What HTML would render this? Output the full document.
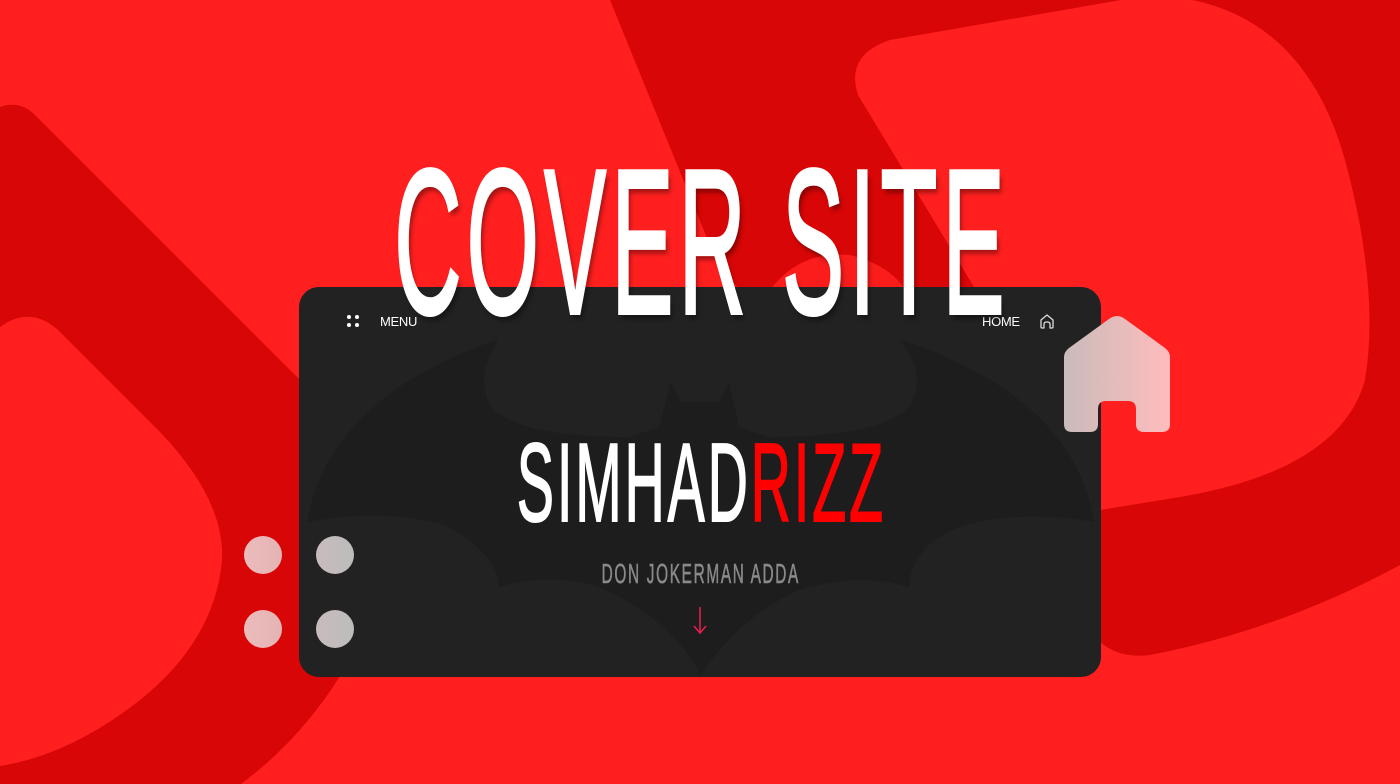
<!DOCTYPE html>
<html><head><meta charset="utf-8"><style>
*{margin:0;padding:0;box-sizing:border-box}
body{width:1400px;height:784px;overflow:hidden;position:relative;background:#ff1f1f;font-family:"Liberation Sans",sans-serif}
.abs{position:absolute}
.t{position:absolute;white-space:nowrap;transform-origin:center center;text-align:center}
</style></head><body>
<svg class="abs" style="left:0;top:0" width="1400" height="784" viewBox="0 0 1400 784">
  <path d="M610 0 L1400 0 L1400 565 Q1280 630 1150 655 Q1110 660 1090 630 L720 270 Z" fill="#d80606"/>
  <path d="M890 40 L1150 -5 Q1300 0 1345 160 Q1380 290 1365 380 Q1340 470 1180 497 L1088 512 L1000 330 L858 95 Q845 55 890 40 Z" fill="#ff1f1f"/>
  <path d="M0 107 Q20 100 35 115 L320 400 L340 676 Q300 740 241 784 L0 784 Z" fill="#d80606"/>
  <path d="M0 327 Q30 305 58 330 L160 432 Q225 500 222 560 Q215 640 140 700 Q70 755 0 766 Z" fill="#ff1f1f"/>
  <path d="M770 290 Q800 250 850 255 Q890 265 905 290 Z" fill="#ff1f1f" opacity="0.9"/>
</svg>

<div class="abs" style="left:299px;top:287px;width:802px;height:390px;background:#222;border-radius:20px;overflow:hidden">
  <svg class="abs" style="left:0;top:0" width="802" height="390" viewBox="0 0 802 390">
    <path d="M200 52 Q30 110 8 235 Q90 220 150 240 Q200 270 200 300 Q250 285 300 300 Q370 330 402 388 Q440 330 500 303 Q560 285 610 300 Q612 260 660 240 Q720 222 795 235 Q775 110 600 52 Q630 90 610 120 Q580 150 470 150 L440 140 L430 95 L420 115 L382 115 L372 95 L360 140 L330 150 Q220 150 192 120 Q175 90 200 52 Z" fill="#1d1d1d"/>
  </svg>
  <div class="abs" style="left:48px;top:28px;width:4px;height:4px;border-radius:50%;background:#fff"></div>
  <div class="abs" style="left:56px;top:28px;width:4px;height:4px;border-radius:50%;background:#fff"></div>
  <div class="abs" style="left:48px;top:36px;width:4px;height:4px;border-radius:50%;background:#fff"></div>
  <div class="abs" style="left:56px;top:36px;width:4px;height:4px;border-radius:50%;background:#fff"></div>
  <div class="abs" style="left:81px;top:27px;color:#fff;font-size:13px;letter-spacing:-0.3px">MENU</div>
  <div class="abs" style="left:683px;top:27px;color:#fff;font-size:13px;letter-spacing:-0.3px">HOME</div>
  <svg class="abs" style="left:739px;top:25px" width="18" height="18" viewBox="0 0 18 18"><path d="M3 8 L9 3 L15 8 L15 15 Q15 16 14 16 L12 16 L12 12 Q12 10 9 10 Q6 10 6 12 L6 16 L4 16 Q3 16 3 15 Z" fill="none" stroke="#ddd" stroke-width="1.3" stroke-linejoin="round"/></svg>
  <div class="t" style="left:0;width:802px;top:272px;color:#8a8a8a;font-size:28px;line-height:30px;letter-spacing:3px;text-indent:3px;transform:scaleX(0.55);-webkit-text-stroke:0.6px #8a8a8a">DON JOKERMAN ADDA</div>
  <svg class="abs" style="left:393px;top:318px" width="16" height="30" viewBox="0 0 16 30"><path d="M8 2 L8 28 M2 21 L8 28 L14 21" fill="none" stroke="#e0204a" stroke-width="1.6"/></svg>
</div>

<div class="t" style="left:200px;width:1000px;top:428px;color:#fff;font-size:111px;line-height:111px;letter-spacing:6px;text-indent:6px;transform:scaleX(0.5);-webkit-text-stroke:2px #fff">SIMHAD<span style="color:#ff0000;-webkit-text-stroke:2px #ff0000">RIZZ</span></div>

<div class="t" style="left:100px;width:1200px;top:138px;color:#fff;font-size:206px;line-height:208px;letter-spacing:12px;text-indent:12px;transform:translateX(-41px) scaleX(0.45);-webkit-text-stroke:4px #fff;text-shadow:6px 6px 6px rgba(0,0,0,0.35)">COVER SITE</div>

<svg class="abs" style="left:1060px;top:312px" width="114" height="124" viewBox="0 0 114 124">
  <defs><linearGradient id="g" x1="0" x2="1" y1="0" y2="0"><stop offset="0" stop-color="#cabbbb"/><stop offset="1" stop-color="#ffbcbc"/></linearGradient></defs>
  <path d="M4 45 Q4 40 9 36 L49 7 Q57 1 65 7 L105 36 Q110 40 110 45 L110 112 Q110 120 102 120 L84 120 Q76 120 76 112 L76 97 Q76 89 68 89 L46 89 Q38 89 38 97 L38 112 Q38 120 30 120 L12 120 Q4 120 4 112 Z" fill="url(#g)"/>
</svg>

<div class="abs" style="left:244px;top:536px;width:38px;height:38px;border-radius:50%;background:linear-gradient(90deg,#ecbcbc,#e4b4b4)"></div>
<div class="abs" style="left:316px;top:536px;width:38px;height:38px;border-radius:50%;background:linear-gradient(90deg,#c8bcbc,#bcbcbc)"></div>
<div class="abs" style="left:244px;top:610px;width:38px;height:38px;border-radius:50%;background:linear-gradient(90deg,#ecbcbc,#e4b4b4)"></div>
<div class="abs" style="left:316px;top:610px;width:38px;height:38px;border-radius:50%;background:linear-gradient(90deg,#c8bcbc,#bcbcbc)"></div>
</body></html>
